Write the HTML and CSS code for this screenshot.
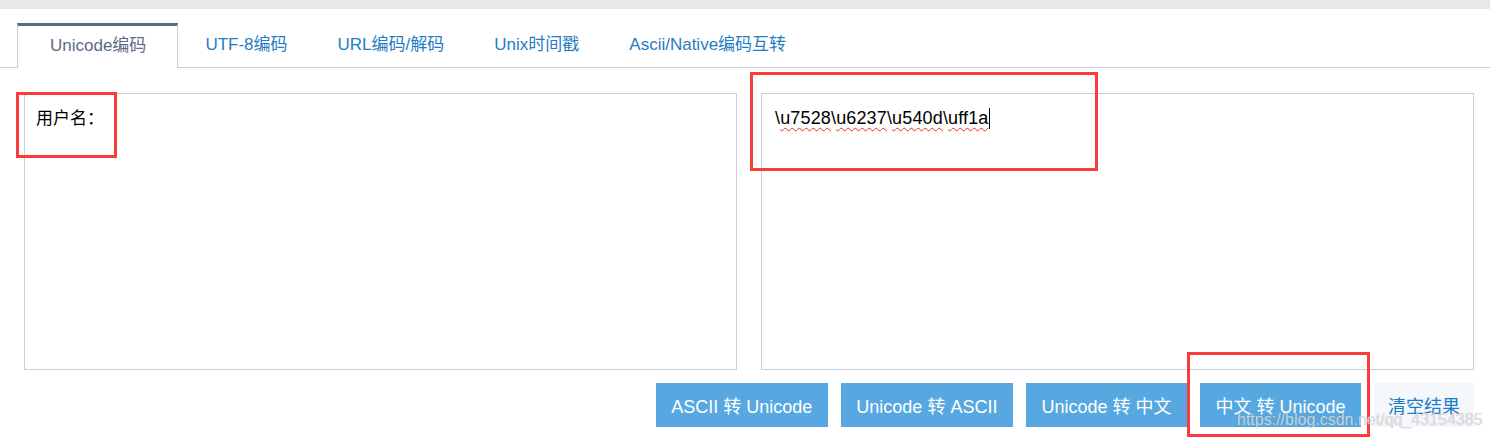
FILE: index.html
```html
<!DOCTYPE html>
<html lang="zh-CN">
<head>
<meta charset="utf-8">
<title>Unicode编码</title>
<link rel="stylesheet" href="styles.css">
</head>
<body>
<div class="page">
  <div class="topbar"></div>
  <nav class="tabs">
    <div class="tab active">Unicode编码</div>
    <div class="tab">UTF-8编码</div>
    <div class="tab">URL编码/解码</div>
    <div class="tab">Unix时间戳</div>
    <div class="tab">Ascii/Native编码互转</div>
  </nav>
  <main class="panel">
    <div class="boxes">
      <div class="box box-src">用户名：</div>
      <div class="box box-out">\<span class="spell">u7528</span>\<span class="spell">u6237</span>\<span class="spell">u540d</span>\<span class="spell">uff1a</span><span class="caret"></span></div>
    </div>
    <div class="actions">
      <button class="btn">ASCII 转 Unicode</button>
      <button class="btn">Unicode 转 ASCII</button>
      <button class="btn">Unicode 转 中文</button>
      <button class="btn">中文 转 Unicode</button>
      <button class="btn btn-light">清空结果</button>
    </div>
  </main>
  <div class="mark mark-src"></div>
  <div class="mark mark-out"></div>
  <div class="mark mark-btn"></div>
  <div class="watermark">https://blog.csdn.net/qq_43154385</div>
</div>
</body>
</html>
```

FILE: styles.css
```css
* { box-sizing: border-box; }
html, body { margin: 0; padding: 0; background: #fff; }
body {
  font-family: "Liberation Sans", "Noto Sans CJK SC", sans-serif;
  color: #000;
}
.page {
  position: relative;
  width: 1490px;
  height: 440px;
  overflow: hidden;
}
.topbar {
  height: 9px;
  background: #e8e8e8;
}
.tabs {
  display: flex;
  margin-top: 14px;
  padding-left: 17px;
  height: 45px;
  border-bottom: 1px solid #c7cdda;
}
.tab {
  padding: 0 25px;
  height: 44px;
  line-height: 44px;
  font-size: 17px;
  color: #1f7dc3;
  white-space: nowrap;
}
.tab.active {
  padding: 0 31px 0 32px;
  height: 45px;
  line-height: 40px;
  color: #5a6a88;
  background: #fff;
  border-top: 3px solid #5a6984;
  border-left: 1px solid #c7cdda;
  border-right: 1px solid #c7cdda;
  margin-right: 2px;
}
.panel {
  padding: 25px 16px 0 24px;
}
.boxes {
  display: grid;
  grid-template-columns: 713px 713px;
  column-gap: 24px;
}
.box {
  height: 277px;
  border: 1px solid #c7cdda;
  padding: 12px 12px;
  line-height: 24px;
}
.box-src {
  font-size: 17px;
  padding-top: 13px;
  padding-left: 11px;
}
.box-out {
  font-size: 18px;
  letter-spacing: 0.15px;
  padding-left: 13px;
}
.spell {
  text-decoration: underline wavy #e52b2b;
  text-decoration-thickness: 1px;
  text-underline-offset: 3px;
}
.caret {
  display: inline-block;
  width: 1px;
  height: 21px;
  background: #000;
  vertical-align: -5px;
}
.actions {
  display: flex;
  justify-content: flex-end;
  gap: 13px;
  margin-top: 13px;
}
.btn {
  height: 44px;
  padding: 0 15.5px;
  border: 0;
  background: #57a8e1;
  color: #fff;
  font-family: "Liberation Sans", "Noto Sans CJK SC", sans-serif;
  font-size: 18px;
  white-space: nowrap;
  cursor: pointer;
}
.btn-light {
  background: #f4f8fc;
  color: #1d7cc6;
  padding: 0 14px;
}
.mark {
  position: absolute;
  border: 3px solid #fb3a3a;
}
.mark-src { left: 16px; top: 92px; width: 101px; height: 66px; }
.mark-out { left: 750px; top: 72px; width: 348px; height: 99px; }
.mark-btn { left: 1187px; top: 352px; width: 183px; height: 85px; }
.watermark {
  position: absolute;
  left: 1237px;
  top: 411px;
  font-family: "Liberation Sans", sans-serif;
  font-size: 16px;
  color: rgba(222, 222, 222, 0.85);
  text-shadow: 0 0 1px rgba(120, 120, 120, 0.35);
  white-space: nowrap;
  pointer-events: none;
}
```
